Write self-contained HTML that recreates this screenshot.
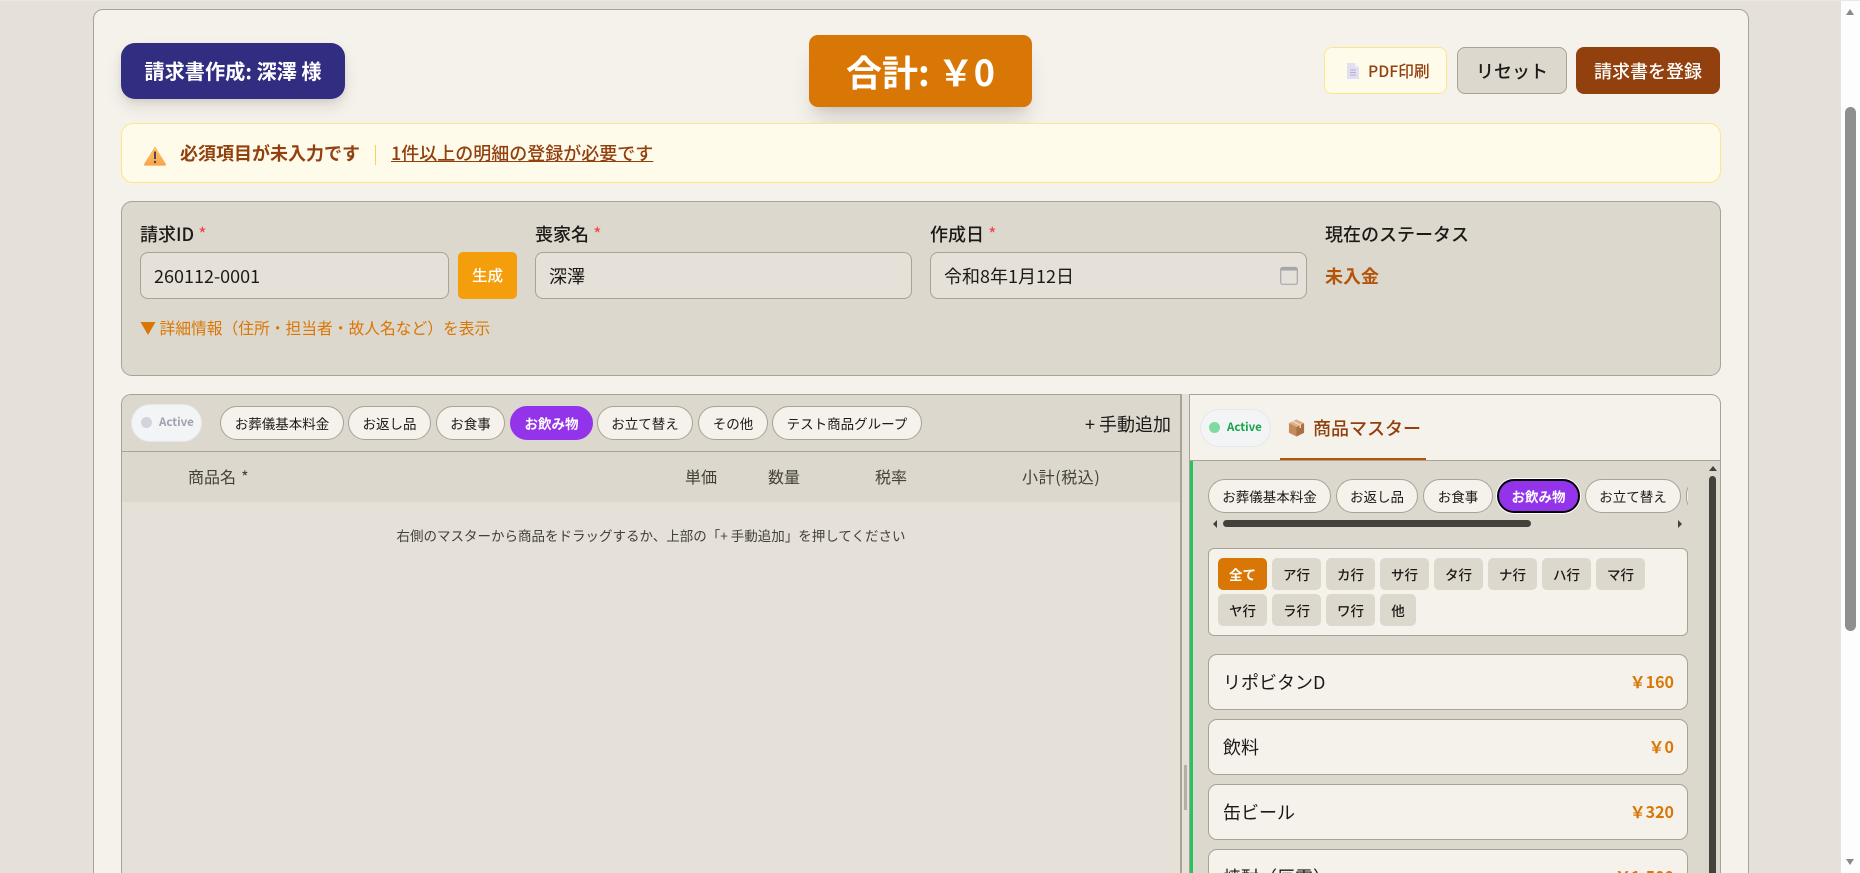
<!DOCTYPE html>
<html lang="ja"><head><meta charset="utf-8"><title>請求書作成</title>
<style>
*{box-sizing:border-box;margin:0;padding:0}
html,body{width:1860px;height:873px;overflow:hidden;background:#e5e0d8}
body{position:relative;font-family:"Noto Sans CJK JP","Liberation Sans",sans-serif;color:#1c1917}
.a{position:absolute}
.t{position:absolute;white-space:nowrap;line-height:1}
.c{position:absolute;display:flex;align-items:center;justify-content:center;white-space:nowrap;line-height:1}
.tab{position:absolute;display:flex;align-items:center;justify-content:center;background:#f5f2eb;border:1px solid #a8a297;border-radius:17px;font-size:13.5px;color:#1c1917;white-space:nowrap}
.tab.on{background:#9333ea;color:#fff;font-weight:700;border-color:#9333ea}
.k{position:absolute;display:flex;align-items:center;justify-content:center;background:#dcd8cd;border-radius:5px;font-size:13.5px;font-weight:500;height:32px;width:49px;color:#1c1917}
.inp{position:absolute;top:252px;height:47px;background:#e5e0d8;border:1px solid #a8a297;border-radius:8px;font-size:18px;line-height:47px;padding-left:13px;color:#1c1917;white-space:nowrap}
.lb{position:absolute;top:224px;font-size:18px;font-weight:500;line-height:20px;white-space:nowrap}
.lb i{color:#ef4444;font-style:normal;font-weight:400;font-size:18px}
.item{position:absolute;left:1208px;width:480px;height:56px;background:#f5f2eb;border:1px solid #a8a297;border-radius:9px}
.item b{position:absolute;left:14px;top:27px;transform:translateY(-50%);font-weight:400;font-size:18px;line-height:1;white-space:nowrap;color:#1c1917}
.item s{position:absolute;right:13px;top:26px;transform:translateY(-50%);text-decoration:none;font-weight:700;font-size:16px;line-height:1;color:#d97706;white-space:nowrap}
.h{position:absolute;top:467px;font-size:16px;line-height:18px;color:#44403c;white-space:nowrap}
</style></head><body>

<!-- outer card -->
<div class="a" style="left:93px;top:9px;width:1656px;height:900px;background:#f5f2eb;border:1px solid #a8a297;border-radius:10px"></div>

<!-- title -->
<div class="c" style="left:121px;top:43px;width:224px;height:56px;background:#312e81;color:#fff;font-weight:700;font-size:20.2px;border-radius:14px;box-shadow:0 8px 16px rgba(0,0,0,.1),0 3px 6px rgba(0,0,0,.06)">請求書作成: 深澤 様</div>

<!-- total -->
<div class="c" style="left:809px;top:35px;width:223px;height:72px;background:#d97706;color:#fff;font-weight:700;font-size:36px;border-radius:9px;box-shadow:0 20px 25px -5px rgba(0,0,0,.12),0 8px 10px -6px rgba(0,0,0,.1)">合計: ￥0</div>

<!-- action buttons -->
<div class="a" style="left:1324px;top:47px;width:123px;height:47px;background:#fffbeb;border:1px solid #fde68a;border-radius:8px"></div>
<svg class="a" style="left:1346px;top:63px" width="14" height="16" viewBox="0 0 14 16"><path d="M1 0h8l4 4v12H1z" fill="#e4dff0"/><path d="M9 0l4 4H9z" fill="#f3f0f8"/><path d="M4 7h6M4 9.5h6M4 12h6" stroke="#b6aed0" stroke-width="1"/></svg>
<div class="t" style="left:1368px;top:63px;font-size:15.75px;color:#92400e;font-weight:500">PDF印刷</div>
<div class="c" style="left:1457px;top:47px;width:110px;height:47px;background:#dcd8cd;border:1px solid #a8a297;border-radius:8px;font-size:18px;font-weight:500">リセット</div>
<div class="c" style="left:1576px;top:47px;width:144px;height:47px;background:#92400e;border-radius:8px;font-size:18px;font-weight:500;color:#fff">請求書を登録</div>

<!-- alert -->
<div class="a" style="left:121px;top:123px;width:1600px;height:60px;background:#fffbeb;border:1px solid #fde68a;border-radius:12px"></div>
<svg class="a" style="left:143px;top:145px" width="24" height="21" viewBox="0 0 24 21"><defs><linearGradient id="w" x1="0" y1="0" x2="0" y2="1"><stop offset="0" stop-color="#fcc66b"/><stop offset="1" stop-color="#f9a24a"/></linearGradient></defs><path d="M12 1.2 23 19.2a1 1 0 0 1-.9 1.4H1.900a1 1 0 0 1-.9-1.400z" fill="url(#w)"/><path d="M12 6.500v7.500" stroke="#4a4a55" stroke-width="2"/><circle cx="12" cy="17" r="1.200" fill="#4a4a55"/></svg>
<div class="t" style="left:180px;top:143px;font-size:18px;font-weight:700;color:#92400e;line-height:20px">必須項目が未入力です</div>
<div class="a" style="left:375px;top:145px;width:1px;height:20px;background:#fcd34d"></div>
<div class="t" style="left:391px;top:143px;font-size:18px;font-weight:500;color:#92400e;line-height:20px;text-decoration:underline">1件以上の明細の登録が必要です</div>

<!-- form -->
<div class="a" style="left:121px;top:201px;width:1600px;height:175px;background:#dcd8cd;border:1px solid #a8a297;border-radius:11px"></div>
<div class="lb" style="left:140px">請求ID <i>*</i></div>
<div class="lb" style="left:535px">喪家名 <i>*</i></div>
<div class="lb" style="left:930px">作成日 <i>*</i></div>
<div class="lb" style="left:1325px">現在のステータス</div>
<div class="inp" style="left:140px;width:309px">260112-0001</div>
<div class="c" style="left:458px;top:252px;width:59px;height:47px;background:#f59e0b;border-radius:5px;color:#fff;font-size:15.500px;font-weight:500">生成</div>
<div class="inp" style="left:535px;width:377px">深澤</div>
<div class="inp" style="left:930px;width:377px">令和8年1月12日</div>
<svg class="a" style="left:1280px;top:266px" width="18" height="19" viewBox="0 0 18 19"><rect x=".7" y="1.500" width="16.600" height="16.800" rx="2" fill="none" stroke="#a3a6ad" stroke-width="1.200"/><path d="M.7 3.500a2 2 0 0 1 2-2h12.600a2 2 0 0 1 2 2V4.500H.7z" fill="#a3a6ad"/></svg>
<div class="t" style="left:1325px;top:266px;font-size:18px;font-weight:700;color:#b45309;line-height:20px">未入金</div>
<div class="t" style="left:140px;top:317px;font-size:15.75px;color:#d97706;line-height:20px"><span style="font-size:16px">▼</span> 詳細情報（住所・担当者・故人名など）を表示</div>

<!-- left panel -->
<div class="a" style="left:121px;top:394px;width:1061px;height:500px;background:#e5e0d8;border:1px solid #a8a297;border-right-width:2px;border-radius:10px 0 0 0;overflow:hidden">
  <div class="a" style="left:0;top:0;width:1060px;height:57px;background:#dcd8cd;border-bottom:1px solid #a8a297"></div>
  <div class="a" style="left:0;top:57px;width:1060px;height:50px;background:#dcd8cd"></div>
</div>
<div class="a" style="left:131px;top:404px;width:71px;height:38px;background:#f3f4f6;border:1px solid #e5e7eb;border-radius:19px"></div>
<div class="a" style="left:141px;top:417px;width:11px;height:11px;background:#d1d5db;border-radius:50%"></div>
<div class="t" style="left:159px;top:417px;font-size:11.500px;font-weight:700;color:#9ca3af">Active</div>
<div class="tab" style="left:220px;top:406px;width:124px;height:34px">お葬儀基本料金</div>
<div class="tab" style="left:348px;top:406px;width:83px;height:34px">お返し品</div>
<div class="tab" style="left:436px;top:406px;width:69px;height:34px">お食事</div>
<div class="tab on" style="left:510px;top:406px;width:83px;height:34px">お飲み物</div>
<div class="tab" style="left:597px;top:406px;width:96px;height:34px">お立て替え</div>
<div class="tab" style="left:698px;top:406px;width:70px;height:34px">その他</div>
<div class="tab" style="left:772px;top:406px;width:150px;height:34px">テスト商品グループ</div>
<div class="t" style="left:1085px;top:414px;font-size:18px;line-height:20px">+ 手動追加</div>

<div class="h" style="left:188px">商品名 <span style="margin-left:1.500px">*</span></div>
<div class="h" style="left:685px">単価</div>
<div class="h" style="left:768px">数量</div>
<div class="h" style="left:875px">税率</div>
<div class="h" style="left:1022px;letter-spacing:.6px">小計(税込)</div>
<div class="t" style="left:121px;width:1060px;text-align:center;top:526px;font-size:13.500px;line-height:18px;color:#44403c">右側のマスターから商品をドラッグするか、上部の「+ 手動追加」を押してください</div>

<!-- splitter -->
<div class="a" style="left:1182px;top:394px;width:7px;height:500px;background:#e5e0d8"></div>
<div class="a" style="left:1184px;top:765px;width:3px;height:45px;background:#b5b0a6"></div>

<!-- right panel -->
<div class="a" style="left:1189px;top:394px;width:532px;height:500px;background:#f5f2eb;border:1px solid #a8a297;border-radius:0 10px 0 0;overflow:hidden">
  <div class="a" style="left:0;top:65px;width:531px;height:1px;background:#a8a297"></div>
  <div class="a" style="left:0;top:66px;width:531px;height:440px;background:#dcd8cd;border-left:3px solid #22c55e"></div>
</div>
<div class="a" style="left:1200px;top:409px;width:71px;height:38px;background:#f3f4f6;border:1px solid #e5e7eb;border-radius:19px"></div>
<div class="a" style="left:1209px;top:422px;width:11px;height:11px;background:#7ddc9d;border-radius:50%"></div>
<div class="t" style="left:1227px;top:422px;font-size:11.500px;font-weight:700;color:#16a34a">Active</div>
<svg class="a" style="left:1288px;top:418px" width="17" height="20" viewBox="0 0 18 20"><path d="M9 1 17 5v10l-8 4-8-4V5z" fill="#c58a5c"/><path d="M9 9l8-4v10l-8 4z" fill="#a96f45"/><path d="M9 1 17 5 9 9 1 5z" fill="#dcb08a"/><path d="M5 3l8 4v3" stroke="#eed9c3" stroke-width="1.500" fill="none"/></svg>
<div class="t" style="left:1313px;top:418px;font-size:18px;font-weight:500;color:#92400e;line-height:20px">商品マスター</div>
<div class="a" style="left:1280px;top:458px;width:146px;height:2px;background:#b45309"></div>

<!-- master tabs -->
<div class="tab" style="left:1208px;top:479px;width:123px;height:34px">お葬儀基本料金</div>
<div class="tab" style="left:1336px;top:479px;width:82px;height:34px">お返し品</div>
<div class="tab" style="left:1423px;top:479px;width:70px;height:34px">お食事</div>
<div class="tab on" style="left:1497px;top:479px;width:83px;height:34px;border:2px solid #000;box-shadow:0 0 0 1px #fff">お飲み物</div>
<div class="tab" style="left:1585px;top:479px;width:96px;height:34px">お立て替え</div>
<div class="a" style="left:1686px;top:479px;width:2px;height:34px;overflow:hidden"><div style="width:30px;height:34px;background:#f5f2eb;border:1px solid #a8a297;border-radius:17px"></div></div>
<!-- h scrollbar -->
<div class="a" style="left:1213px;top:520px;width:0;height:0;border:4px solid transparent;border-left-width:0;border-right:4px solid #44403c"></div>
<div class="a" style="left:1223px;top:520px;width:308px;height:7px;background:#44403c;border-radius:4px"></div>
<div class="a" style="left:1678px;top:520px;width:0;height:0;border:4px solid transparent;border-right-width:0;border-left:4px solid #44403c"></div>

<!-- kana -->
<div class="a" style="left:1208px;top:548px;width:480px;height:88px;background:#f5f2eb;border:1px solid #a8a297;border-radius:6px"></div>
<div class="k" style="left:1218px;top:558px;background:#d97706;color:#fff;font-weight:700">全て</div>
<div class="k" style="left:1272px;top:558px">ア行</div>
<div class="k" style="left:1326px;top:558px">カ行</div>
<div class="k" style="left:1380px;top:558px">サ行</div>
<div class="k" style="left:1434px;top:558px">タ行</div>
<div class="k" style="left:1488px;top:558px">ナ行</div>
<div class="k" style="left:1542px;top:558px">ハ行</div>
<div class="k" style="left:1596px;top:558px">マ行</div>
<div class="k" style="left:1218px;top:594px">ヤ行</div>
<div class="k" style="left:1272px;top:594px">ラ行</div>
<div class="k" style="left:1326px;top:594px">ワ行</div>
<div class="k" style="left:1380px;top:594px;width:36px">他</div>

<!-- items -->
<div class="item" style="top:654px"><b>リポビタンD</b><s>￥160</s></div>
<div class="item" style="top:719px"><b>飲料</b><s>￥0</s></div>
<div class="item" style="top:784px"><b>缶ビール</b><s>￥320</s></div>
<div class="item" style="top:849px"><b>焼酎（辰雲）</b><s>￥1,500</s></div>

<!-- v inner scrollbar -->
<div class="a" style="left:1709px;top:466px;width:0;height:0;border:4px solid transparent;border-top-width:0;border-bottom:5px solid #44403c"></div>
<div class="a" style="left:1709px;top:476px;width:7px;height:400px;background:#44403c;border-radius:4px 4px 0 0"></div>

<!-- window scrollbar -->
<div class="a" style="left:1841px;top:0;width:19px;height:873px;background:#fdfdfd"></div>
<div class="a" style="left:1846px;top:9px;width:0;height:0;border:4.500px solid transparent;border-top-width:0;border-bottom:6px solid #8a8a8a"></div>
<div class="a" style="left:1845px;top:107px;width:11px;height:524px;background:#8f8f8f;border-radius:6px"></div>
<div class="a" style="left:1846px;top:859px;width:0;height:0;border:4.500px solid transparent;border-bottom-width:0;border-top:6px solid #8a8a8a"></div>
<div class="a" style="left:0;top:0;width:1860px;height:1px;background:#ebe8e4"></div>
</body></html>
